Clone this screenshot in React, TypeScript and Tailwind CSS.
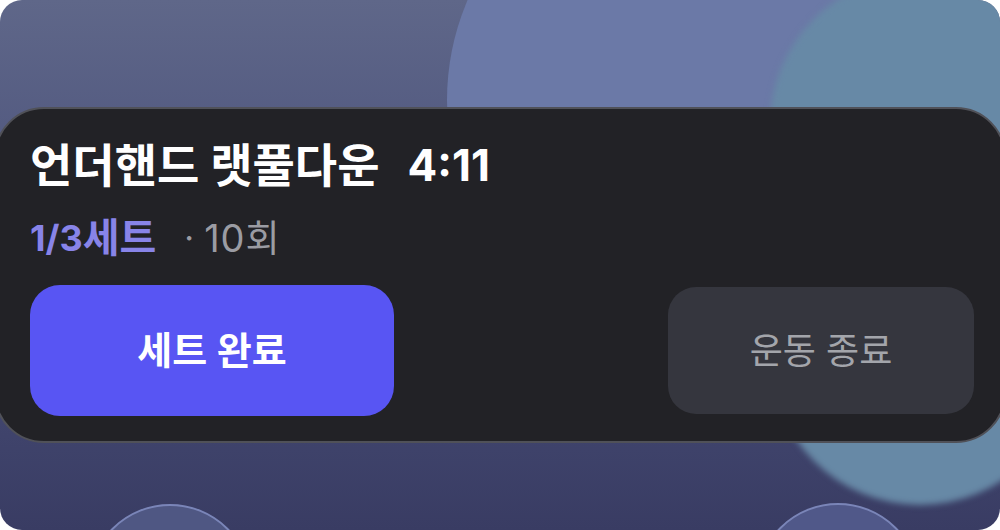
import React from "react";

const font = { fontFamily: '"Inter", "Noto Sans CJK KR", sans-serif' };

const Backdrop = () => (
    <>
        {/* soft colour blobs behind the card */}
        <div className="absolute left-[447px] top-[-153px] w-[506px] h-[506px] rounded-full bg-[#6b79a7]" />
        <div className="absolute left-[770px] top-[-25px] w-[300px] h-[530px] rounded-full bg-[#6789a6] blur-[3px]" />
        <div className="absolute left-[88px] top-[504px] w-[164px] h-[164px] rounded-full bg-[#4f5783] border-2 border-[#7a85b8]" />
        <div className="absolute left-[756px] top-[503px] w-[164px] h-[164px] rounded-full bg-[#505889] border-2 border-[#7a85b8]" />
    </>
);

export default function App() {
    return (
        <div className="bg-white w-[1000px] h-[530px]" style={font}>
            <div className="relative w-[1000px] h-[530px] rounded-[22px] overflow-hidden bg-gradient-to-b from-[#5f6789] via-[#4a507a] to-[#393c63]">
                <Backdrop />
                <div className="relative pt-[107px]">
                    <div className="ml-[-6px] w-[1012px] h-[336px] rounded-[50px] bg-[#222226] border-2 border-[#505158] pl-[34px] pr-[30px] pt-[31px] flex flex-col">
                        <div className="h-[50px] flex items-center gap-[28px] text-white font-bold leading-none">
                            <span className="text-[46px]">언더핸드 랫풀다운</span>
                            <span className="text-[44px]">4:11</span>
                        </div>
                        <div className="mt-[29px] h-[38px] flex items-center leading-none">
                            <span className="font-bold text-[#8884e8] text-[36px]">1/3</span>
                            <span className="font-bold text-[#8884e8] text-[40px]">세트</span>
                            <span className="ml-[28px] text-[34px] text-[#9b9ca3]">·</span>
                            <span className="ml-[10px] text-[38px] tracking-[1px] text-[#9b9ca3]">10</span>
                            <span className="text-[37px] text-[#9b9ca3]">회</span>
                        </div>
                        <div className="mt-[28px] flex items-center justify-between">
                            <button className="w-[364px] h-[131px] rounded-[30px] bg-[#5855f3] text-white text-[38px] font-semibold">
                                세트 완료
                            </button>
                            <button className="w-[306px] h-[127px] rounded-[28px] bg-[#35363e] text-[#a3a5ab] text-[36px]">
                                운동 종료
                            </button>
                        </div>
                    </div>
                </div>
            </div>
        </div>
    );
}
